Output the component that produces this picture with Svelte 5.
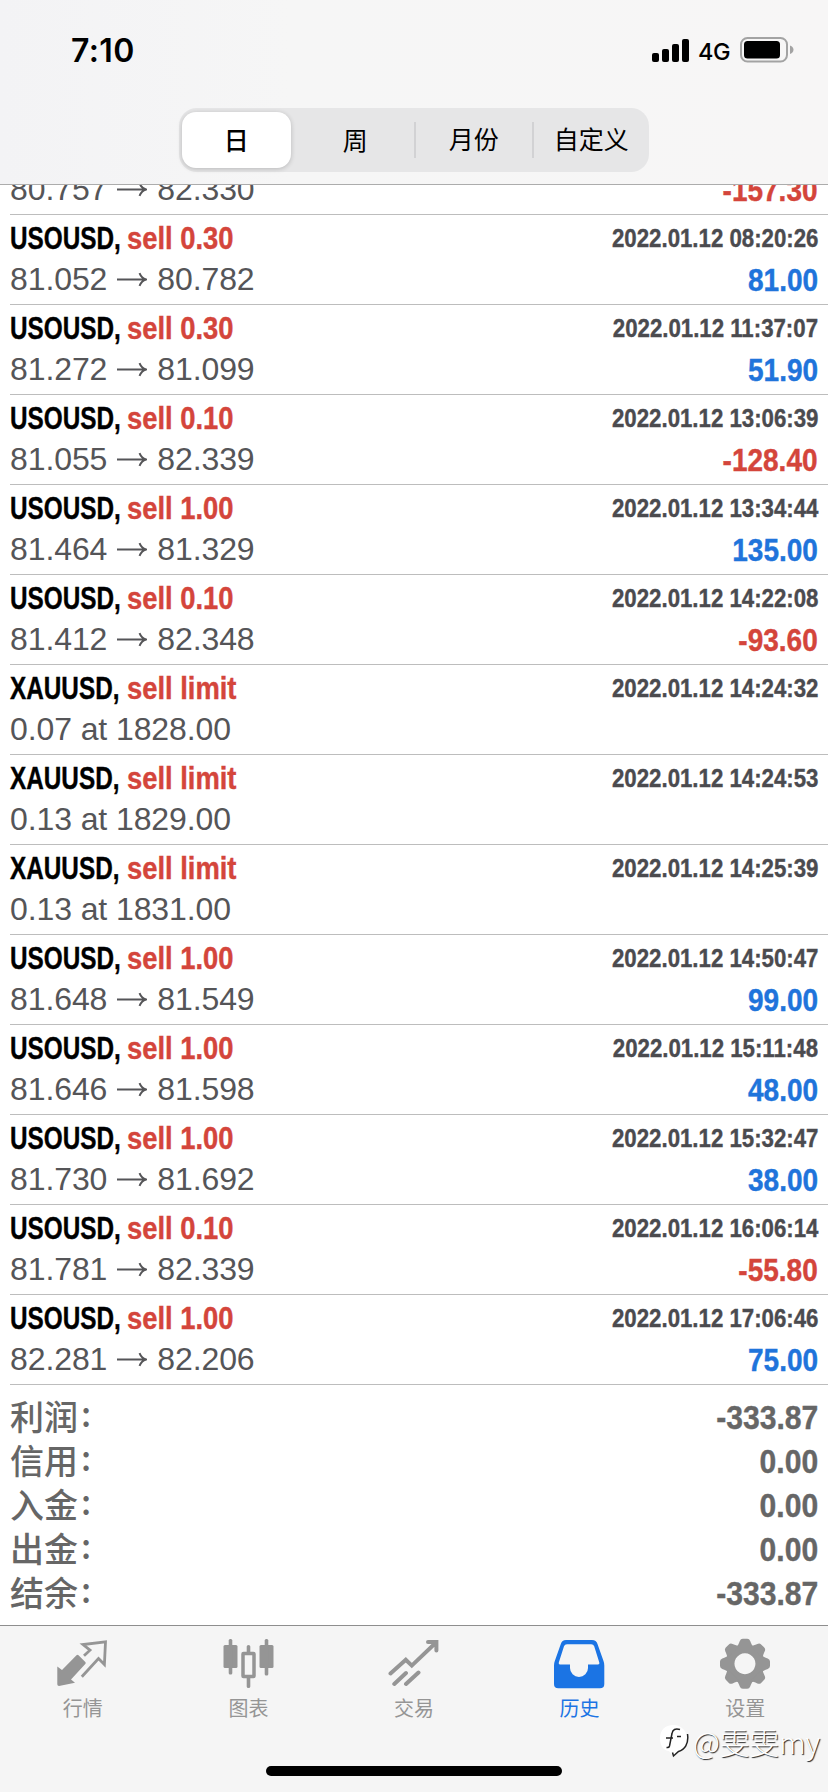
<script lang="ts">
	type Deal = {
		symbol?: string;
		action?: string;
		time?: string;
		from?: string;
		to?: string;
		note?: string;
		profit?: string;
	};

	const periods = ['日', '周', '月份', '自定义'];
	let period = $state(0);

	const deals: Deal[] = [
		{ from: '80.757', to: '82.330', profit: '-157.30' },
		{ symbol: 'USOUSD', action: 'sell 0.30', time: '2022.01.12 08:20:26', from: '81.052', to: '80.782', profit: '81.00' },
		{ symbol: 'USOUSD', action: 'sell 0.30', time: '2022.01.12 11:37:07', from: '81.272', to: '81.099', profit: '51.90' },
		{ symbol: 'USOUSD', action: 'sell 0.10', time: '2022.01.12 13:06:39', from: '81.055', to: '82.339', profit: '-128.40' },
		{ symbol: 'USOUSD', action: 'sell 1.00', time: '2022.01.12 13:34:44', from: '81.464', to: '81.329', profit: '135.00' },
		{ symbol: 'USOUSD', action: 'sell 0.10', time: '2022.01.12 14:22:08', from: '81.412', to: '82.348', profit: '-93.60' },
		{ symbol: 'XAUUSD', action: 'sell limit', time: '2022.01.12 14:24:32', note: '0.07 at 1828.00' },
		{ symbol: 'XAUUSD', action: 'sell limit', time: '2022.01.12 14:24:53', note: '0.13 at 1829.00' },
		{ symbol: 'XAUUSD', action: 'sell limit', time: '2022.01.12 14:25:39', note: '0.13 at 1831.00' },
		{ symbol: 'USOUSD', action: 'sell 1.00', time: '2022.01.12 14:50:47', from: '81.648', to: '81.549', profit: '99.00' },
		{ symbol: 'USOUSD', action: 'sell 1.00', time: '2022.01.12 15:11:48', from: '81.646', to: '81.598', profit: '48.00' },
		{ symbol: 'USOUSD', action: 'sell 1.00', time: '2022.01.12 15:32:47', from: '81.730', to: '81.692', profit: '38.00' },
		{ symbol: 'USOUSD', action: 'sell 0.10', time: '2022.01.12 16:06:14', from: '81.781', to: '82.339', profit: '-55.80' },
		{ symbol: 'USOUSD', action: 'sell 1.00', time: '2022.01.12 17:06:46', from: '82.281', to: '82.206', profit: '75.00' }
	];

	const totals = [
		['利润', '-333.87'],
		['信用', '0.00'],
		['入金', '0.00'],
		['出金', '0.00'],
		['结余', '-333.87']
	];

	const tabs = [
		{ id: 'quotes', label: '行情' },
		{ id: 'charts', label: '图表' },
		{ id: 'trade', label: '交易' },
		{ id: 'history', label: '历史' },
		{ id: 'settings', label: '设置' }
	];
	let tab = $state('history');
</script>

<div class="screen">
	<header>
		<div class="status">
			<span class="clock">7:10</span>
			<div class="indicators">
				<svg width="37" height="23" viewBox="0 0 37 23">
					<rect x="0" y="14" width="7" height="9" rx="2" />
					<rect x="10" y="10" width="7" height="13" rx="2" />
					<rect x="20" y="5" width="7" height="18" rx="2" />
					<rect x="30" y="0" width="7" height="23" rx="2" />
				</svg>
				<span class="network">4G</span>
				<svg width="54" height="26" viewBox="0 0 54 26">
					<rect x="1" y="1" width="46" height="23.5" rx="6.5" fill="none" stroke="#a3a3a3" stroke-width="2" />
					<rect x="4" y="4" width="36" height="17.5" rx="3.5" />
					<path d="M50 8.5q3.5 1.5 3.5 4.2t-3.5 4.3z" fill="#a3a3a3" />
				</svg>
			</div>
		</div>
		<div class="segments">
			{#each periods as name, i}
				<button class:selected={period === i} class:divided={i > 1} onclick={() => (period = i)}>{name}</button>
			{/each}
		</div>
	</header>

	<main>
		<div class="deals">
			{#each deals as deal}
				<div class="deal">
					<div class="line">
						{#if deal.symbol}
							<div class="title">
								<span class="symbol"><b>{deal.symbol},</b></span>
								<span class="action">{deal.action}</span>
							</div>
							<span class="time">{deal.time}</span>
						{/if}
					</div>
					<div class="line">
						{#if deal.note}
							<span class="price">{deal.note}</span>
						{:else}
							<span class="price">
								{deal.from}
								<svg width="30" height="15" viewBox="0 0 30 15">
									<path d="M0 7.5h29M22.5 1.2q2 5 6.5 6.3q-4.5 1.3-6.5 6.3" />
								</svg>
								{deal.to}
							</span>
							<span class="profit" class:loss={deal.profit?.startsWith('-')}>{deal.profit}</span>
						{/if}
					</div>
				</div>
			{/each}
		</div>
		<div class="totals">
			{#each totals as [label, value]}
				<div class="total">
					<span class="label">{label}<i>:</i></span>
					<span class="value">{value}</span>
				</div>
			{/each}
		</div>
	</main>

	<nav>
		<div class="tabs">
			{#each tabs as { id, label }}
				<button class="tab" class:active={tab === id} onclick={() => (tab = id)}>
					<svg width="51" height="52" viewBox="0 0 51 52" fill="currentColor">
						{#if id === 'quotes'}
							<path d="M.3 28.5 5 32 19.5 17.2q1-.8 2 0l6.8 6.8q1 1 0 2L14 41.500l4 3.200L2 48q-1.700 0-1.700-1.700z" />
							<path d="M27 17.8l6-5.6-7-5.6L48.500 3.800 47.400 26.500 41.500 20.500 24.800 38.700" fill="none" stroke="currentColor" stroke-width="2.8" />
						{:else if id === 'charts'}
							<rect x=".5" y="7" width="14" height="23" rx="1.5" />
							<rect x="5.7" y="1" width="3.6" height="35.5" rx="1.5" />
							<rect x="20" y="15.5" width="11" height="23" rx=".5" fill="none" stroke="currentColor" stroke-width="3.5" />
							<path d="M23.7 8.5q0-1.5 1.8-1.5t1.8 1.5V15h-3.6zM23.7 39h3.6v9.5q0 1.5-1.8 1.5t-1.8-1.5z" />
							<rect x="36.5" y="7" width="14" height="23" rx="1.5" />
							<rect x="41.7" y="1" width="3.6" height="36.5" rx="1.5" />
						{:else if id === 'trade'}
							<g fill="none" stroke="currentColor" stroke-width="4" stroke-linecap="round">
								<path d="M2.5 35.5 17.8 21.8l6 5.800L47.500 5M40 4h8.400v8.500M6.300 46 18 35M18 46 30.500 34.500" />
							</g>
						{:else if id === 'history'}
							<path
								fill-rule="evenodd"
								d="M12 2h26q4.300 0 5.500 4l6 17q.8 2 .8 4.500V46q0 4.300-4.300 4.300H4.300Q0 50.300 0 46V27.500Q0 25 .8 23l6-17Q8 2 12 2zM13 6.300q-2.300 0-3 2L4.800 24.500q-.5 2 1.200 2h10V30a9 9 0 0 0 18 0v-3.500h10q1.900 0 1.300-2L40.200 8.300q-.7-2-3-2z"
							/>
						{:else}
							<path fill-rule="evenodd" d="M25 6.2a19.5 19.500 0 1 0 .1 0zM25 15.200a10.500 10.500 0 1 1-.1 0z" />
							{#each [0, 45, 90, 135, 180, 225, 270, 315] as angle}
								<path d="M16 9.500q2-1.500 3-4.500l.8-2q.8-2.300 3-2.300h4.400q2.200 0 3 2.300l.8 2q1 3 3 4.500z" transform="rotate({angle} 25 25.7)" />
							{/each}
						{/if}
					</svg>
					<span>{label}</span>
				</button>
			{/each}
		</div>
		<div class="home"></div>
	</nav>

	<div class="watermark">
		<svg width="30" height="34" viewBox="0 0 30 34">
			<path d="M14.500 1C6 1 1 6 1 14.500S6 27 10 27l4 5 5-4c6-2 9.500-6.500 9.500-13S23 1 14.500 1z" fill="#fff" />
			<path d="M21 5.500q-7-2-8 4L10.500 22q-.5 2-3 1.500M7 14h7M18 12.500h4M28.500 10c1.500 10-3 16-9 17.500L14.500 32l-1-3.500" fill="none" stroke="#222" stroke-width="1.500" />
		</svg>
		<span>@雯雯my</span>
	</div>
</div>

<style>
	:global(body) {
		background: #fff;
	}

	.screen {
		position: relative;
		display: flex;
		flex-direction: column;
		width: 828px;
		height: 1792px;
		overflow: hidden;
		font-family: 'Liberation Sans', 'Noto Sans CJK SC', sans-serif;
		color: #000;
	}

	button {
		padding: 0;
		border: 0;
		background: none;
		font: inherit;
		color: inherit;
	}

	svg {
		display: block;
		flex: none;
	}

	header {
		box-sizing: border-box;
		flex: none;
		height: 185px;
		border-bottom: 1px solid #acacac;
		background: linear-gradient(90deg, #f3f3f5, #f6f6f6 35%, #f7f6f6);
	}

	.status {
		display: flex;
		align-items: center;
		justify-content: space-between;
		height: 100px;
		padding: 0 34px 0 71px;
		font-family: Inter, sans-serif;
	}

	.clock {
		font-size: 32px;
		font-weight: 600;
		letter-spacing: 0.4px;
	}

	.indicators {
		display: flex;
		align-items: center;
	}

	.network {
		width: 32px;
		margin: 2px 10px 0 9px;
		font-size: 23.5px;
		font-weight: 500;
		letter-spacing: -0.5px;
	}

	.segments {
		box-sizing: border-box;
		display: grid;
		grid-template-columns: repeat(4, 1fr);
		width: 470px;
		height: 64px;
		margin: 8px auto 0;
		padding: 4px 0;
		border-radius: 18px;
		background: #e6e6e7;
		font-family: 'Noto Sans CJK SC', sans-serif;
		font-size: 25px;
		line-height: 40px;
	}

	.segments button {
		padding-bottom: 3px;
		border-radius: 14px;
	}

	.segments .divided {
		margin: 10px 0;
		border-left: 2px solid #d2d2d4;
		border-radius: 0;
		line-height: 33px;
	}

	.segments .selected {
		margin: 0 6px 0 3px;
		background: #fff;
		box-shadow: 0 1px 5px rgba(0, 0, 0, 0.2);
		font-weight: 500;
	}

	main {
		flex: 1;
		min-height: 0;
		display: flex;
		flex-direction: column;
	}

	/* scrolled to the end, so the first deal is cut by the header */
	.deals {
		display: flex;
		flex-direction: column;
		justify-content: flex-end;
		height: 1200px;
		overflow: hidden;
	}

	.deal {
		box-sizing: border-box;
		flex: none;
		height: 90px;
		margin-left: 10px;
		padding: 3px 10px 0 0;
		border-bottom: 1px solid #bdbdbd;
	}

	.line {
		display: flex;
		justify-content: space-between;
		height: 41px;
		line-height: 41px;
		white-space: nowrap;
	}

	/* condensed bold */
	.title,
	.time,
	.profit,
	.value {
		font-weight: 700;
		-webkit-text-stroke: 0.4px currentColor;
	}

	.title {
		display: flex;
		font-size: 32px;
	}

	.symbol {
		width: 117px;
	}

	.symbol b {
		display: inline-block;
		transform: scaleX(0.76);
		transform-origin: left;
	}

	.action {
		color: #d4453b;
		transform: scaleX(0.855);
		transform-origin: left;
	}

	.time {
		font-size: 26px;
		color: #4b4b4f;
		transform: scaleX(0.855);
		transform-origin: right;
	}

	.price {
		display: flex;
		align-items: center;
		gap: 10px;
		font-size: 32px;
		letter-spacing: -0.1px;
		color: #555558;
	}

	.price svg {
		fill: none;
		stroke: #555558;
		stroke-width: 2;
	}

	.profit {
		font-size: 32px;
		line-height: 43px;
		color: #2074db;
		transform: scaleX(0.875);
		transform-origin: right;
	}

	.loss {
		color: #d4453b;
	}

	.totals {
		padding: 10px 10px 0;
		color: #666;
	}

	.total {
		display: flex;
		justify-content: space-between;
		height: 44px;
		font-size: 34px;
		line-height: 44px;
	}

	.label {
		display: flex;
		font-family: 'Noto Sans CJK SC', sans-serif;
		font-weight: 500;
		line-height: 42px;
	}

	.label i {
		margin: -3px 0 0 3px;
		font-style: normal;
	}

	.value {
		transform: scaleX(0.885);
		transform-origin: right;
	}

	nav {
		box-sizing: border-box;
		flex: none;
		height: 167px;
		border-top: 1px solid #8e8e8e;
		background: #f5f5f5;
	}

	.tabs {
		display: grid;
		grid-template-columns: repeat(5, 1fr);
		height: 140px;
	}

	.tab {
		display: flex;
		flex-direction: column;
		align-items: center;
		padding-top: 12px;
		color: #959595;
		font-family: 'Noto Sans CJK SC', sans-serif;
		font-size: 20px;
		line-height: 28px;
	}

	.tab span {
		margin-top: 4px;
	}

	.tab.active {
		color: #1b74e4;
	}

	.home {
		width: 296px;
		height: 10px;
		margin: 0 auto;
		border-radius: 5px;
		background: #000;
	}

	.watermark {
		position: absolute;
		right: 8px;
		bottom: 31px;
		display: flex;
		align-items: center;
		gap: 4px;
		color: #fff;
		font-family: 'Noto Sans CJK SC', sans-serif;
		font-size: 29.5px;
		font-weight: 300;
		line-height: 40px;
		text-shadow: 1px 1px 1px #222;
	}
</style>
